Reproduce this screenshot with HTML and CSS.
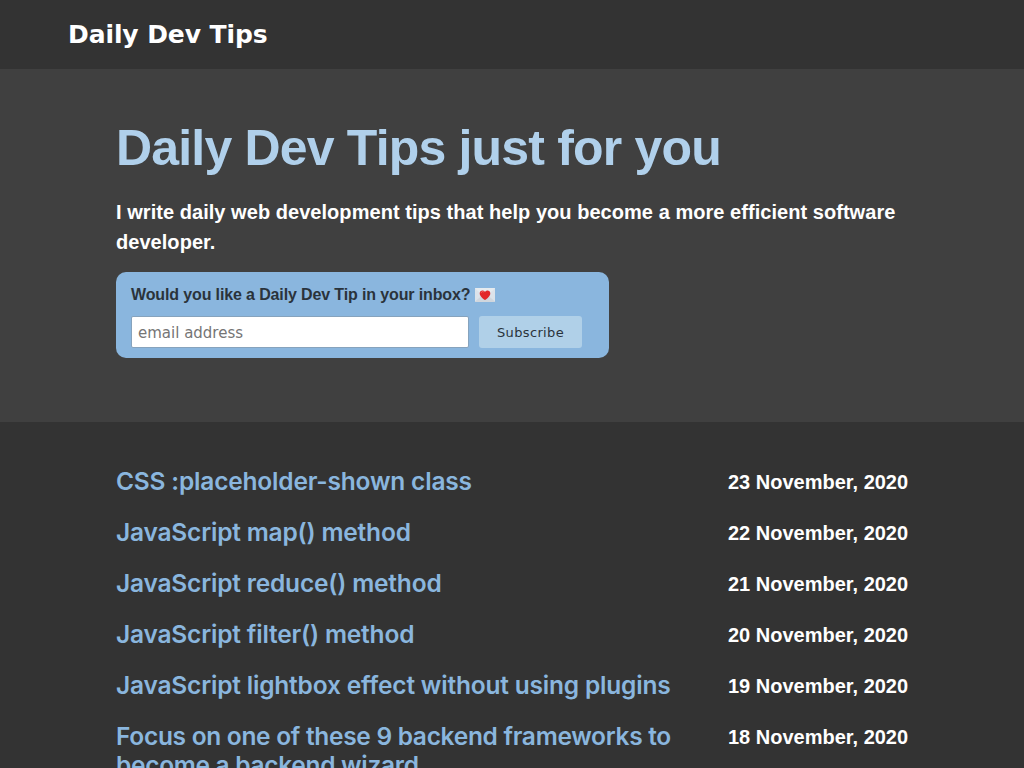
FILE: index.html
```html
<!DOCTYPE html>
<html lang="en">
<head>
<meta charset="utf-8">
<title>Daily Dev Tips</title>
<link rel="stylesheet" href="styles.css">
</head>
<body>
<header class="site-header"><a class="brand">Daily Dev Tips</a></header>
<section class="hero">
  <h1 class="hero-title">Daily Dev Tips just for you</h1>
  <p class="hero-text">I write daily web development tips that help you become a more efficient software developer.</p>
  <form class="signup">
    <label class="signup-label" for="email"><span>Would you like a Daily Dev Tip in your inbox?</span>
      <svg class="letter" viewBox="0 0 20 14" aria-hidden="true">
        <rect width="20" height="14" rx="1" fill="#dce3ea"/>
        <path d="M0 13.5 7.5 7h5L20 13.5V14H0z" fill="#d0d6dd"/>
        <path d="M0 .5 10 9 20 .5V0H0z" fill="#e6ebef"/>
        <path d="M10 12C7.500 10.500 4.700 7.700 4.700 5.400 4.700 2.200 8.700 1.600 10 4.100c1.300-2.500 5.300-1.900 5.300 1.300 0 2.300-2.800 5.100-5.300 6.600z" fill="#e2272b"/>
        <path d="M6.300 4.700c.2-1.300 1.700-1.500 2.500-.6" fill="none" stroke="#f66b68" stroke-width="1"/>
      </svg>
    </label>
    <div class="signup-row">
      <input class="signup-input" id="email" type="email" placeholder="email address">
      <button class="signup-button" type="button">Subscribe</button>
    </div>
  </form>
</section>
<main class="posts">
  <article class="post"><h2 class="post-title">CSS :placeholder-shown class</h2><time class="post-date">23 November, 2020</time></article>
  <article class="post"><h2 class="post-title">JavaScript map() method</h2><time class="post-date">22 November, 2020</time></article>
  <article class="post"><h2 class="post-title">JavaScript reduce() method</h2><time class="post-date">21 November, 2020</time></article>
  <article class="post"><h2 class="post-title">JavaScript filter() method</h2><time class="post-date">20 November, 2020</time></article>
  <article class="post"><h2 class="post-title">JavaScript lightbox effect without using plugins</h2><time class="post-date">19 November, 2020</time></article>
  <article class="post"><h2 class="post-title post-title--long">Focus on one of these 9 backend frameworks to become a backend wizard</h2><time class="post-date">18 November, 2020</time></article>
</main>
</body>
</html>
```
FILE: styles.css
```css
* { box-sizing: border-box; }
body {
  margin: 0;
  height: 768px;
  overflow: hidden;
  display: flex;
  flex-direction: column;
  background: #333;
  color: #fff;
  font: bold 20px/30px "Liberation Sans", Arial, sans-serif;
}
.site-header {
  flex: none;
  height: 69px;
  padding: 1px 68px 0;
  display: flex;
  align-items: center;
}
.brand { font: bold 25px/30px "DejaVu Sans", Verdana, sans-serif; letter-spacing: -0.1px; }
.hero {
  flex: none;
  height: 353px;
  padding: 48px 116px 0;
  background: #404040;
}
.hero-title {
  margin: 0;
  font-size: 50px;
  line-height: 62px;
  letter-spacing: -0.82px;
  color: #b0d0eb;
}
.hero-text { margin: 18px -10px 0 0; letter-spacing: 0.045px; }
.signup {
  width: 493px;
  height: 86px;
  margin-top: 15px;
  padding: 13px 15px 11px;
  border-radius: 10px;
  background: #8ab6de;
  color: #2a333b;
}
.signup-label {
  display: flex;
  align-items: center;
  gap: 5px;
  font-size: 16px;
  line-height: 20px;
  letter-spacing: -0.13px;
}
.letter { width: 20px; height: 14px; margin-top: -1px; }
.signup-row { display: flex; gap: 10px; margin-top: 11px; }
.signup-input {
  width: 338px;
  height: 32px;
  padding: 1px 6px 0;
  border: 1px solid #86a3bd;
  border-radius: 2px;
  background: #fff;
  font: 15px "DejaVu Sans", Verdana, sans-serif;
}
.signup-input::placeholder { color: #757575; }
.signup-button {
  width: 103px;
  height: 32px;
  padding: 0;
  border: 0;
  border-radius: 3px;
  background: #b0d0e8;
  color: #2a333b;
  font: 13px "DejaVu Sans", Verdana, sans-serif;
  letter-spacing: 0.35px;
}
.posts {
  flex: none;
  padding: 45px 116px 0;
  display: flex;
  flex-direction: column;
  gap: 21px;
}
.post { display: flex; justify-content: space-between; align-items: flex-start; }
.post-title {
  width: 570px;
  margin: 0;
  color: #8ab6de;
  font: 600 24.5px/29px Inter, sans-serif;
  font-variation-settings: "opsz" 14;
  letter-spacing: -0.19px;
}
.post-title--long { letter-spacing: -0.3px; }
.post-date { width: 180px; white-space: nowrap; }
```
